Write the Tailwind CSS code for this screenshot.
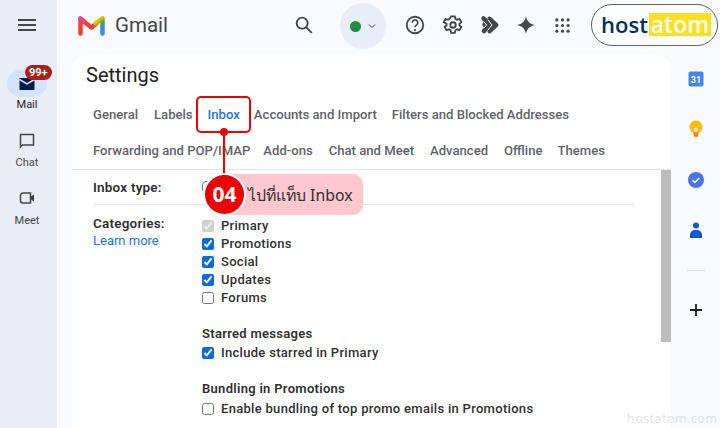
<!DOCTYPE html>
<html lang="en">
<head>
    <meta charset="UTF-8">
    <title>Gmail Settings</title>
    <script src="https://cdn.jsdelivr.net/npm/@tailwindcss/browser@4"></script>
</head>
<body class="w-[720px] h-[428px] overflow-hidden bg-[#f8fafd] font-['Roboto',sans-serif]">
    <div class="relative flex w-[720px] h-[428px] overflow-hidden">
        <!-- Left rail -->
        <aside class="w-[57px] h-full shrink-0 bg-[#e9eef6] pr-[3px] flex flex-col items-center">
            <svg class="w-6 h-6 mt-[13px]" viewBox="0 0 24 24" fill="#444746"><path d="M3 6h18v2H3zM3 11h18v2H3zM3 16h18v2H3z"/></svg>
            <div class="relative mt-[33px] w-10 h-[27px] rounded-full bg-[#d3e3fd] flex items-center justify-center">
                <svg class="w-[18px] h-[18px]" viewBox="0 0 24 24" fill="#041e49"><path d="M2 4h20v16H2z"/><path d="M2 6l10 6 10-6" fill="none" stroke="#d3e3fd" stroke-width="2"/></svg>
                <span class="absolute left-[18px] top-[-5px] h-[15px] px-[4px] rounded-full bg-[#a8201a] text-white text-[11px] leading-[15px] font-bold">99+</span>
            </div>
            <span class="text-[11px] leading-[15px] text-[#1f1f1f]">Mail</span>
            <svg class="w-[18px] h-[18px] mt-[20px]" viewBox="0 0 18 18" fill="none" stroke="#444746" stroke-width="1.5"><path d="M2.500 2.500h13v10.500h-11l-2 2z"/></svg>
            <span class="mt-[5px] text-[11px] leading-[15px] text-[#444746]">Chat</span>
            <svg class="w-[18px] h-[18px] mt-[19px]" viewBox="0 0 18 18" fill="none" stroke="#444746" stroke-width="1.5"><path d="M5 4h7.500v10H5a2.500 2.500 0 0 1-2.500-2.500v-5A2.500 2.500 0 0 1 5 4z"/><path d="M12.500 7.500l3.500-2v7l-3.500-2z" fill="#444746" stroke="none"/></svg>
            <span class="mt-[6px] text-[11px] leading-[15px] text-[#444746]">Meet</span>
        </aside>

        <div class="flex-1 flex flex-col min-w-0">
            <!-- Top bar -->
            <header class="h-[54px] shrink-0 pb-[4px] flex items-center">
                <svg class="ml-[21px] w-[27px] h-[22px]" viewBox="0 0 27 22" fill="none">
                    <defs>
                        <linearGradient id="mright" x1="0.300" y1="0" x2="0.700" y2="1"><stop offset="0.150" stop-color="#fbbc04"/><stop offset="0.500" stop-color="#34a853"/><stop offset="0.750" stop-color="#4285f4"/></linearGradient>
                    </defs>
                    <path d="M2.500 19.500V5l11 8.500" stroke="#ea4335" stroke-width="4.500" stroke-linecap="round" stroke-linejoin="round"/>
                    <path d="M2.500 4.500L6 7" stroke="#e8457c" stroke-width="4.500" stroke-linecap="round"/>
                    <path d="M13.500 13.500L19 9" stroke="#ea4335" stroke-width="4.500"/>
                    <path d="M17.500 9.500L24.500 4.200V19.500" stroke="url(#mright)" stroke-width="4.500" stroke-linecap="round" stroke-linejoin="round"/>
                </svg>
                <span class="ml-[10px] w-[50px] text-[20.500px] leading-none text-[#444746]">Gmail</span>
                <svg class="ml-[128px] w-[22px] h-[22px]" viewBox="0 0 24 24" fill="none" stroke="#444746" stroke-width="2"><circle cx="10" cy="10" r="6"/><path d="M14.500 14.500L20.500 20.500"/></svg>
                <div class="ml-[25px] mt-[2px] w-[46px] h-[46px] rounded-full bg-[#e9eef6] flex items-center justify-center gap-[7px]">
                    <span class="w-[11px] h-[11px] rounded-full bg-[#1e8e3e]"></span>
                    <svg class="w-2 h-2" viewBox="0 0 8 8" fill="none" stroke="#444746" stroke-width="1"><path d="M1 2.500l3 3 3-3"/></svg>
                </div>
                <svg class="ml-[18px] w-[22px] h-[22px]" viewBox="0 0 24 24" fill="none" stroke="#444746" stroke-width="2"><circle cx="12" cy="12" r="9"/><path d="M9 9.500a3 3 0 1 1 4.500 2.600c-1 .6-1.500 1.200-1.500 2.400" stroke-width="1.800"/><circle cx="12" cy="17.500" r="1.200" fill="#444746" stroke="none"/></svg>
                <svg class="ml-[16px] w-[22px] h-[22px]" viewBox="0 0 24 24" fill="none" stroke="#444746" stroke-width="2"><path d="M10 2.500h4l.6 2.800 1.800 1 2.700-.9 2 3.400-2.100 1.900v1.600l2.100 1.900-2 3.400-2.700-.9-1.800 1-.6 2.800h-4l-.6-2.800-1.800-1-2.700.9-2-3.400 2.100-1.900v-1.600L1.900 8.800l2-3.400 2.700.9 1.800-1z"/><circle cx="12" cy="12" r="3"/></svg>
                <svg class="ml-[16px] w-[20px] h-[20px]" viewBox="0 0 20 20" fill="none" stroke-linecap="round" stroke-linejoin="round">
                    <path d="M3.500 3.500l3.500 3-2.500 3 2.500 3-3 3.500" stroke="#444746" stroke-width="4.500"/>
                    <path d="M9.500 3.500L16.500 10l-7 6.500z" fill="#444746" stroke="#444746" stroke-width="4"/>
                    <path d="M8 5l4 5-4 5M4.500 7.500L6.500 10l-2 2.500" stroke="#f8fafd" stroke-width="1"/>
                </svg>
                <svg class="ml-[16px] w-[20px] h-[20px]" viewBox="0 0 20 20" fill="#444746"><path d="M10 1c.8 5 3.500 8 9 9-5.500 1-8.200 4-9 9-.8-5-3.500-8-9-9 5.500-1 8.200-4 9-9z"/></svg>
                <svg class="ml-[19px] w-[15px] h-[15px]" viewBox="0 0 16 16" fill="#444746"><circle cx="2" cy="2" r="1.700"/><circle cx="8" cy="2" r="1.700"/><circle cx="14" cy="2" r="1.700"/><circle cx="2" cy="8" r="1.700"/><circle cx="8" cy="8" r="1.700"/><circle cx="14" cy="8" r="1.700"/><circle cx="2" cy="14" r="1.700"/><circle cx="8" cy="14" r="1.700"/><circle cx="14" cy="14" r="1.700"/></svg>
                <div class="ml-[21px] mt-[-1px] w-[127px] h-[42px] rounded-full border border-[#5f6368] bg-white flex items-center justify-center leading-[23px] font-['Open_Sans',sans-serif]">
                    <span class="text-[22px] font-semibold text-[#002f5f] pl-[3px]">host</span><span class="bg-[#ffdf1f] text-white text-[23px] ml-[1px] w-[62px] text-center font-semibold">atom</span>
                </div>
            </header>

            <div class="flex-1 flex min-h-0">
                <!-- Settings card -->
                <main class="ml-[15px] w-[599px] rounded-t-2xl bg-white flex flex-col min-h-0">
                    <h1 class="ml-[14px] mt-[8px] text-[20px] leading-[26px] text-[#202124]">Settings</h1>
                    <nav class="ml-[21px] mt-[9px] flex flex-col text-[13.100px] font-medium text-[#5f6368]">
                        <div class="h-[36px] flex items-center">
                            <span>General</span><span class="ml-[16px]">Labels</span><span class="ml-[15px] text-[#1a73e8]">Inbox</span><span class="ml-[14px]">Accounts and Import</span><span class="ml-[15px]">Filters and Blocked Addresses</span>
                        </div>
                        <div class="h-[36px] flex items-center">
                            <span>Forwarding and POP/IMAP</span><span class="ml-[13px]">Add-ons</span><span class="ml-[16px]">Chat and Meet</span><span class="ml-[16px]">Advanced</span><span class="ml-[16px]">Offline</span><span class="ml-[15px]">Themes</span>
                        </div>
                    </nav>
                    <div class="relative flex-1 min-h-0 border-t border-[#e5e7eb] overflow-hidden">
                        <span class="absolute right-0 top-0 w-[10px] h-[172px] bg-[#bdbdbd]"></span>
                        <div class="ml-[21px] w-[542px] h-[35px] flex items-center border-b border-[#e5e7eb] text-[13.500px] tracking-[0.2px] font-semibold text-[#303030]">
                            <span class="w-[109px]">Inbox type:</span>
                            <span class="w-3 h-3 rounded-sm border border-[#767676]"></span>
                        </div>
                        <div class="ml-[21px] flex text-[13px] tracking-[0.3px] font-medium text-[#303030]">
                            <div class="w-[109px] pt-[10px]">
                                <p class="text-[13.500px] tracking-[0.2px] font-semibold leading-[17px]">Categories:</p>
                                <a class="block leading-[17px] tracking-normal font-normal text-[#1a73e8]">Learn more</a>
                            </div>
                            <div class="pt-[12px]">
                                <label class="h-[18px] flex items-center gap-[7px]"><input type="checkbox" checked disabled class="w-3 h-3 accent-[#0b6bdc]"><span>Primary</span></label>
                                <label class="h-[18px] flex items-center gap-[7px]"><input type="checkbox" checked class="w-3 h-3 accent-[#0b6bdc]"><span>Promotions</span></label>
                                <label class="h-[18px] flex items-center gap-[7px]"><input type="checkbox" checked class="w-3 h-3 accent-[#0b6bdc]"><span>Social</span></label>
                                <label class="h-[18px] flex items-center gap-[7px]"><input type="checkbox" checked class="w-3 h-3 accent-[#0b6bdc]"><span>Updates</span></label>
                                <label class="h-[18px] flex items-center gap-[7px]"><input type="checkbox" class="w-3 h-3"><span>Forums</span></label>
                                <p class="mt-[18px] h-[18px] leading-[18px] font-semibold">Starred messages</p>
                                <label class="mt-[1px] h-[18px] flex items-center gap-[7px]"><input type="checkbox" checked class="w-3 h-3 accent-[#0b6bdc]"><span>Include starred in Primary</span></label>
                                <p class="mt-[18px] h-[18px] leading-[18px] font-semibold">Bundling in Promotions</p>
                                <label class="mt-[2px] h-[18px] flex items-center gap-[7px]"><input type="checkbox" class="w-3 h-3"><span>Enable bundling of top promo emails in Promotions</span></label>
                            </div>
                        </div>
                    </div>
                </main>

                <!-- Right side panel -->
                <aside class="flex-1 flex flex-col items-center">
                    <svg class="w-4 h-4 mt-[17px]" viewBox="0 0 16 16"><rect x="0.500" y="0.500" width="15" height="15" rx="2" fill="#4285f4"/><text x="8" y="12" text-anchor="middle" font-size="9" font-weight="700" fill="#fff" font-family="Roboto">31</text></svg>
                    <svg class="w-4 h-[17px] mt-[33px]" viewBox="0 0 16 17"><circle cx="8" cy="7" r="6.500" fill="#fbbc04"/><rect x="5.500" y="10" width="5" height="7" rx="2" fill="#f58a07"/><circle cx="8" cy="10" r="2.500" fill="#fbd0c0"/></svg>
                    <svg class="w-4 h-4 mt-[35px]" viewBox="0 0 16 16"><circle cx="8" cy="8" r="8" fill="#4a73ee"/><path d="M4.500 8.300l2.300 2.200 4.500-4.500" fill="none" stroke="#fff" stroke-width="1.400"/></svg>
                    <svg class="w-3 h-4 mt-[34px]" viewBox="0 0 12 16" fill="#0b57d0"><circle cx="6" cy="3.500" r="3"/><path d="M0 16v-3a5 5 0 0 1 5-5h2a5 5 0 0 1 5 5v3z"/></svg>
                    <span class="w-[18px] h-px mt-[32px] bg-[#dadce0]"></span>
                    <svg class="w-[14px] h-[14px] mt-[32px]" viewBox="0 0 14 14" stroke="#1f1f1f" stroke-width="1.800"><path d="M7 1v12M1 7h12"/></svg>
                </aside>
            </div>
        </div>

        <!-- Tutorial overlay -->
        <div class="absolute left-[196px] top-[96px] w-[55px] h-[37px] rounded-[5px] border-2 border-[#ee0000]"></div>
        <span class="absolute left-[220px] top-[128px] w-[8px] h-[8px] rounded-full bg-[#ee0000]"></span>
        <span class="absolute left-[223px] top-[132px] w-[2px] h-[44px] bg-[#ee0000]"></span>
        <div class="absolute left-[225px] top-[174px] w-[138px] h-[41px] rounded-r-[10px] bg-[#ffc7cf] flex items-center pl-[23px] pt-[3px] text-[15.800px] text-[#303030] font-['Noto_Sans',sans-serif]">ไปที่แท็บ Inbox</div>
        <div class="absolute left-[205px] top-[175px] w-[39px] h-[39px] rounded-full bg-[#ee0000] ring-2 ring-white flex items-center justify-center text-white text-[21px] font-bold font-['Open_Sans',sans-serif]">04</div>
        <span class="absolute left-[627px] top-[410px] text-[12.500px] tracking-[0.5px] text-[#e2e2e2] font-['Open_Sans',sans-serif]">hostatom.com</span>
    </div>
</body>
</html>
